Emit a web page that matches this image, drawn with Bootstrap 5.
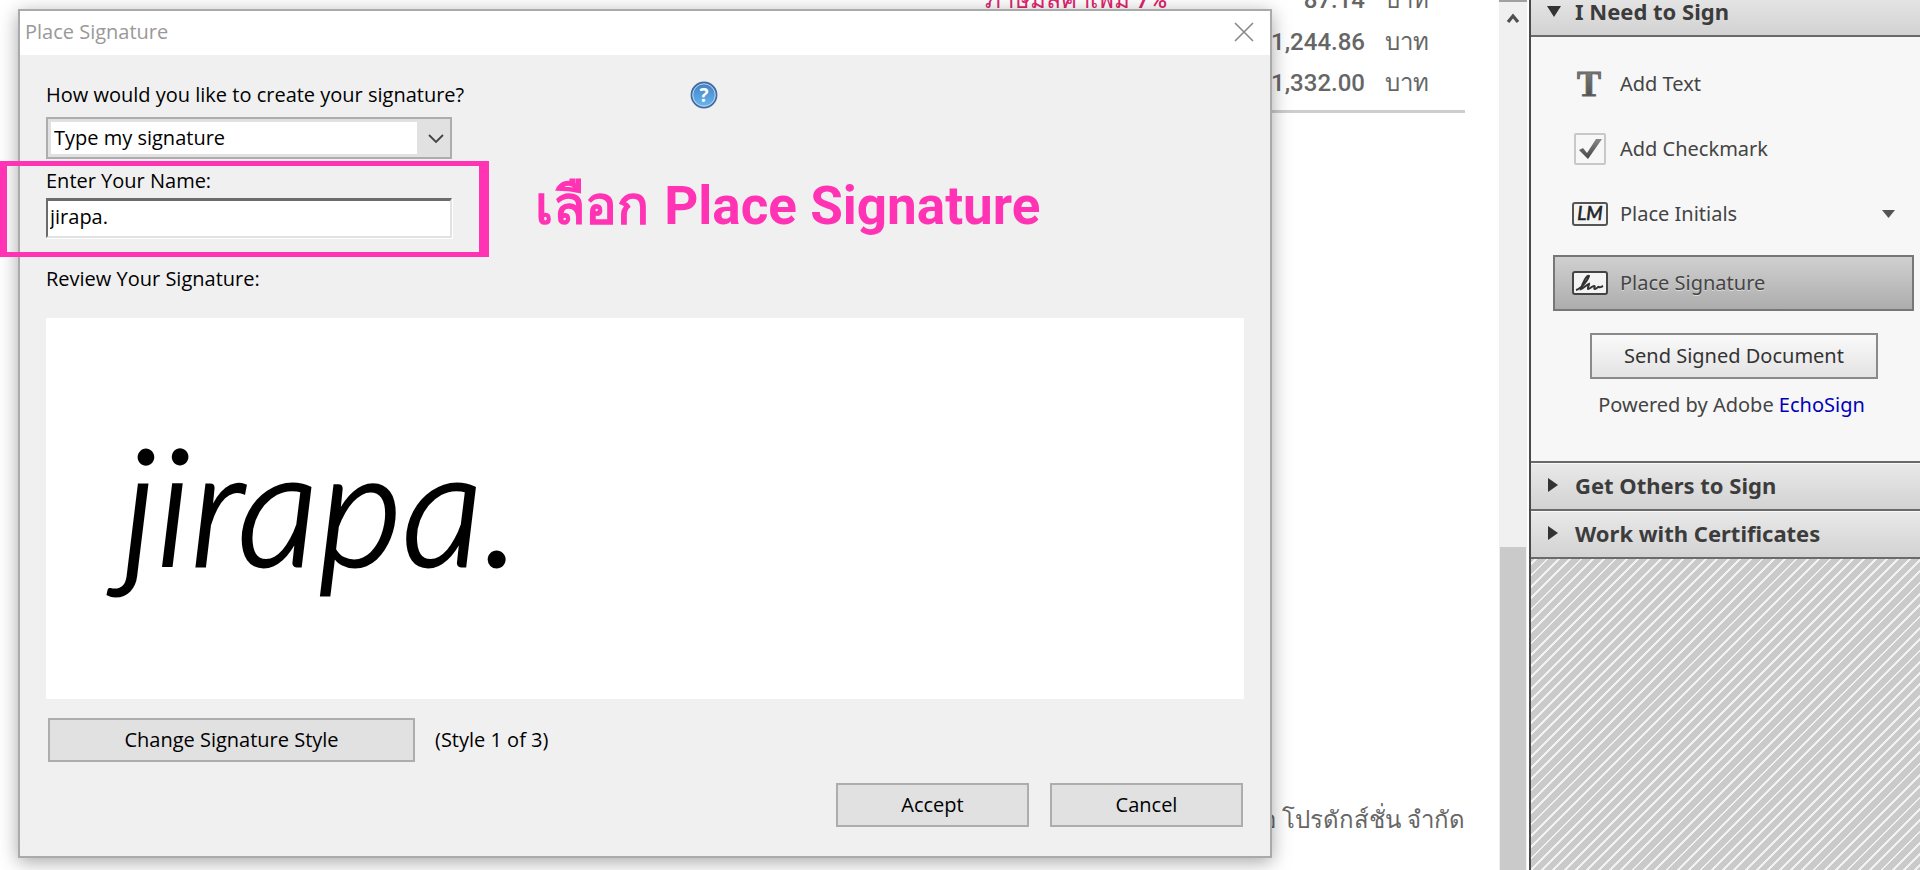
<!DOCTYPE html>
<html lang="en">
<head>
<meta charset="utf-8">
<meta name="viewport" content="width=device-width, initial-scale=1">
<title>Place Signature</title>
<link href="https://cdn.jsdelivr.net/npm/bootstrap@5.3.0/dist/css/bootstrap.min.css" rel="stylesheet">
<style>
  body { font-family: "Noto Sans", "Open Sans", sans-serif; font-size: 20px; line-height: 24px; color: #000; background: #fff; }
  .doc-area { min-width: 0; }
  /* document page, scrolled a little past its top */
  .doc-page { margin-top: -21px; padding-right: 34px; color: #666; font-family: "Roboto", "Noto Sans", sans-serif; font-size: 24px; font-weight: 500; }
  .totals { margin-left: auto; width: 480px; border-bottom: 3px solid #cdcdcd; }
  .totals td { height: 42px; padding: 0; vertical-align: middle; text-align: right; }
  .totals tr:last-child td { height: 48px; padding-bottom: 6px; }
  .totals td:first-child { text-align: left; color: #e0246e; }
  .totals td:last-child { width: 100px; padding-right: 36px; }
  .company { padding-bottom: 38px; text-align: right; }

  .dlg { position: absolute; left: 18px; top: 9px; right: 257px; background: #f0f0f0; border: 2px solid #aaa; box-shadow: 0 4px 18px rgba(0,0,0,.35); font-family: "Open Sans", sans-serif; }
  .dlg-title { height: 44px; padding: 0 16px 2px 5px; background: #fff; color: #999; }
  .dlg-body { padding: 28px 26px 29px; }
  .dlg-field { width: 406px; margin-top: 10px; }
  .dlg-select { appearance: none; display: block; height: 42px; border: 2px solid #adadad; border-radius: 0; padding: 0 6px; color: #000;
    background: #e1e1e1 linear-gradient(#fff, #fff) 3px 3px / 366px 32px no-repeat; }
  .dlg-caret { position: absolute; right: 8px; top: 16px; pointer-events: none; }
  .dlg-input { display: block; height: 40px; margin-top: 5px; padding: 0 2px 4px; border: 2px solid; border-color: #6b6b6b #e3e3e3 #e3e3e3 #6b6b6b; border-top-width: 3px; background: #fff; outline: 0; box-shadow: 1px 1px #fff; }
  .help-mark { position: absolute; left: 670px; top: 26px; }
  .plain { border: 0; background: none; padding: 0; line-height: 0; }
  .review-label { margin: 29px 0 27px; }
  .preview { height: 381px; background: #fff; font: italic 300 162px/200px "Lato", cursive; padding: 86px 0 0 76px; overflow: hidden; -webkit-text-stroke: 3px #000; }
  .style-row { margin-top: 19px; padding-left: 2px; gap: 20px; }
  .act-row { margin-top: 21px; padding-right: 1px; gap: 21px; }
  .dlg-btn { height: 44px; border: 2px solid #adadad; border-radius: 0; background: #e1e1e1; padding: 0; color: #000; }
  .w-style { width: 367px; }
  .w-act { width: 193px; }

  .mark-box { position: absolute; left: -3px; top: 161px; width: 492px; height: 96px; border: 5px solid #ff33b4; border-left-width: 10px; border-right-width: 10px; pointer-events: none; }
  .mark-text { position: absolute; left: 535px; top: 170px; font: 700 53px/72px "Roboto", sans-serif; color: #ff33b4; white-space: nowrap; }
  .mark-text span { margin-right: 2px; }

  .vscroll { width: 30px; background: #f0f0f0; border-right: 2px solid #fff; }
  .vscroll-up { height: 36px; border-top: 2px solid #a0a0a0; }
  .vscroll-space { height: 511px; }
  .vscroll-thumb { background: #cacaca; margin: 0 1px; }

  .side { width: 391px; border-left: 2px solid #4a4a4a; color: #444;
    background: repeating-linear-gradient(135deg, #cacaca 0 6px, #f2f2f2 6px 8px); }
  .side-head { display: flex; align-items: center; height: 48px; gap: 14px; padding: 0 0 2px 16px; width: 100%; border: 0; border-bottom: 2px solid #6a6a6a; background: linear-gradient(#e9e9e9, #d2d2d2); box-shadow: inset 0 1px #f8f8f8; font-weight: 700; font-size: 22px; color: #3c3c3c; text-align: left; }
  .side-head svg { width: 14px; }
  .side-head.cut { margin-top: -11px; }
  .side-body { background: #f7f7f7; border-bottom: 2px solid #6a6a6a; padding: 19px 6px 44px 22px; }
  .tool { display: flex; align-items: center; gap: 12px; height: 56px; padding: 0 18px 0 18px; border: 1px solid transparent; background: none; width: 100%; text-align: left; color: #444; }
  .tool svg:first-child { width: 36px; flex: none; }
  .tool + .tool { margin-top: 9px; }
  .tool + .tool.on { margin-top: 13px; background: linear-gradient(#d0d0d0, #adadad); border: 2px solid #777; padding: 0 17px; text-shadow: 0 1px #ddd; }
  .send { display: block; width: 288px; height: 46px; margin: 22px auto 0 37px; border: 2px solid #8a8a8a; border-radius: 0; background: linear-gradient(#fafafa, #e3e3e3); color: #333; padding: 0; }
  .powered { margin: 14px 0 0; padding-right: 4px; }
  .powered a { color: #00b; text-decoration: none; }
</style>
</head>
<body>
<div class="d-flex vh-100 overflow-hidden">
  <main class="doc-area flex-grow-1 position-relative d-flex">
    <div class="doc-page flex-grow-1 d-flex flex-column justify-content-between">
      <table class="totals">
        <tbody>
          <tr><td lang="th">ภาษีมูลค่าเพิ่ม 7%</td><td>87.14</td><td lang="th">บาท</td></tr>
          <tr><td></td><td>1,244.86</td><td lang="th">บาท</td></tr>
          <tr><td></td><td>1,332.00</td><td lang="th">บาท</td></tr>
        </tbody>
      </table>
      <div class="company" lang="th">โอ โปรดักส์ชั่น จำกัด</div>
    </div>
    <div class="vscroll d-flex flex-column">
      <div class="vscroll-up d-flex justify-content-center align-items-start pt-2">
        <svg width="14" height="16" viewBox="0 0 14 16"><path d="M2 12 7 6l5 6" fill="none" stroke="#505050" stroke-width="3.2"/></svg>
      </div>
      <div class="vscroll-space flex-shrink-0"></div>
      <div class="vscroll-thumb flex-grow-1"></div>
    </div>

    <section class="dlg" role="dialog" aria-labelledby="dlgTitle">
      <div class="dlg-title d-flex align-items-center justify-content-between">
        <span id="dlgTitle">Place Signature</span>
        <button class="plain" type="button" aria-label="Close"><svg width="20" height="20" viewBox="0 0 20 20"><path d="M1 1l18 18M19 1 1 19" stroke="#888" stroke-width="1.6"/></svg></button>
      </div>
      <form class="dlg-body position-relative">
        <label class="d-block" for="how">How would you like to create your signature?</label>
        <button class="plain help-mark" type="button" aria-label="Help">
          <svg width="28" height="28" viewBox="0 0 28 28"><defs><linearGradient id="hb" x2="0" y2="1"><stop stop-color="#3f7fc4"/><stop offset="1" stop-color="#6bb8f0"/></linearGradient></defs><circle cx="14" cy="14" r="12.6" fill="url(#hb)" stroke="#45699b" stroke-width="1.6"/><circle cx="14" cy="14" r="11.2" fill="none" stroke="#b7d6f2" stroke-width="1"/><text x="14" y="21" text-anchor="middle" font-family="Open Sans" font-weight="700" font-size="19" fill="#fff">?</text></svg>
        </button>
        <div class="dlg-field position-relative">
          <select id="how" class="dlg-select w-100"><option>Type my signature</option></select>
          <svg class="dlg-caret" width="16" height="12" viewBox="0 0 16 12"><path d="M1 2l7 7 7-7" fill="none" stroke="#444" stroke-width="1.8"/></svg>
        </div>
        <div class="dlg-field">
          <label class="d-block" for="nm">Enter Your Name:</label>
          <input id="nm" class="dlg-input w-100" type="text" value="jirapa.">
        </div>
        <div class="review-label">Review Your Signature:</div>
        <div class="preview">jirapa.</div>
        <div class="style-row d-flex align-items-center">
          <button class="dlg-btn w-style" type="button">Change Signature Style</button>
          <span>(Style 1 of 3)</span>
        </div>
        <div class="act-row d-flex justify-content-end">
          <button class="dlg-btn w-act" type="button">Accept</button>
          <button class="dlg-btn w-act" type="button">Cancel</button>
        </div>
      </form>
    </section>
    <div class="mark-box"></div>
    <div class="mark-text"><span lang="th">เลือก</span> Place Signature</div>
  </main>

  <aside class="side flex-shrink-0">
    <button class="side-head cut" type="button"><svg height="12" viewBox="0 0 14 12"><path d="M0 1h14L7 12z" fill="#333"/></svg>I Need to Sign</button>
    <div class="side-body">
      <button class="tool" type="button">
        <svg height="32" viewBox="0 0 36 32"><defs><linearGradient id="tg" x2="0" y2="1"><stop stop-color="#888"/><stop offset="1" stop-color="#444"/></linearGradient></defs><text x="17" y="28" text-anchor="middle" font-family="Liberation Serif" font-weight="700" font-size="36" fill="url(#tg)" stroke="#666">T</text></svg>
        Add Text</button>
      <button class="tool" type="button">
        <svg height="32" viewBox="0 0 36 32"><rect x="3" y="1" width="30" height="30" rx="1" fill="#f7f7f7" stroke="#c8c8c8" stroke-width="2"/><path d="M7 17l4-2 4 5L24 6h6L16 26z" fill="url(#tg)"/></svg>
        Add Checkmark</button>
      <button class="tool" type="button">
        <svg height="24" viewBox="0 0 36 24"><rect x="1" y="1" width="34" height="22" rx="2" fill="#f4f4f4" stroke="#555" stroke-width="2"/><text x="18" y="18" text-anchor="middle" font-family="Lato" font-style="italic" font-weight="400" font-size="19" fill="#222" stroke="#222" stroke-width=".6">LM</text></svg>
        <span class="flex-grow-1">Place Initials</span>
        <svg width="13" height="8" viewBox="0 0 13 8"><path d="M0 0h13L6.500 8z" fill="#555"/></svg></button>
      <button class="tool on" type="button">
        <svg height="24" viewBox="0 0 36 24"><rect x="1" y="1" width="34" height="22" rx="2" fill="#f4f4f4" stroke="#444" stroke-width="2"/><path d="M4 19C9 18 16 9 17 5c-2-2-7 8-8 13 3-1 5-4 8-5 0 2-2 4-1 5 2 0 4-3 6-3s-1 3 1 3 3-3 4-2 2 0 4-1" fill="none" stroke="#333" stroke-width="2"/></svg>
        Place Signature</button>
      <button class="send" type="button">Send Signed Document</button>
      <p class="powered text-center">Powered by Adobe <a href="#">EchoSign</a></p>
    </div>
    <button class="side-head" type="button"><svg height="14" viewBox="0 0 14 14"><path d="M1 0l10 7-10 7z" fill="#333"/></svg>Get Others to Sign</button>
    <button class="side-head" type="button"><svg height="14" viewBox="0 0 14 14"><path d="M1 0l10 7-10 7z" fill="#333"/></svg>Work with Certificates</button>
  </aside>
</div>
<script src="https://cdn.jsdelivr.net/npm/bootstrap@5.3.0/dist/js/bootstrap.bundle.min.js"></script>
</body>
</html>
